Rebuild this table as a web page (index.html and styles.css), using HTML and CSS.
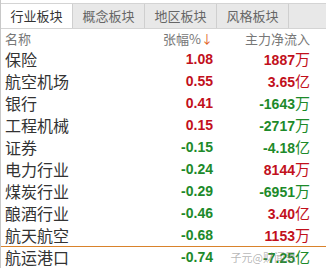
FILE: index.html
```
<!DOCTYPE html>
<html>
<head>
<meta charset="utf-8">
<link rel="stylesheet" href="styles.css">
</head>
<body>
<div class="panel">
  <div class="tabs">
    <div class="tab active">行业板块</div>
    <div class="tab">概念板块</div>
    <div class="tab">地区板块</div>
    <div class="tab">风格板块</div>
    <div class="tab rest"></div>
  </div>
  <div class="row head">
    <div class="name">名称</div>
    <div class="chg">张幅%<span class="arrow">↓</span></div>
    <div class="flow">主力净流入</div>
  </div>
  <div class="row"><div class="name">保险</div><div class="chg up">1.08</div><div class="flow up">1887<span class="u">万</span></div></div>
  <div class="row"><div class="name">航空机场</div><div class="chg up">0.55</div><div class="flow up">3.65<span class="u">亿</span></div></div>
  <div class="row"><div class="name">银行</div><div class="chg up">0.41</div><div class="flow down">-1643<span class="u">万</span></div></div>
  <div class="row"><div class="name">工程机械</div><div class="chg up">0.15</div><div class="flow down">-2717<span class="u">万</span></div></div>
  <div class="row"><div class="name">证券</div><div class="chg down">-0.15</div><div class="flow down">-4.18<span class="u">亿</span></div></div>
  <div class="row"><div class="name">电力行业</div><div class="chg down">-0.24</div><div class="flow up">8144<span class="u">万</span></div></div>
  <div class="row"><div class="name">煤炭行业</div><div class="chg down">-0.29</div><div class="flow down">-6951<span class="u">万</span></div></div>
  <div class="row"><div class="name">酿酒行业</div><div class="chg down">-0.46</div><div class="flow up">3.40<span class="u">亿</span></div></div>
  <div class="row sel"><div class="name">航天航空</div><div class="chg down">-0.68</div><div class="flow up">1153<span class="u">万</span></div></div>
  <div class="row"><div class="name">航运港口</div><div class="chg down">-0.74</div><div class="flow down">-7.25<span class="u">亿</span><span class="wm">子元@财闻思</span></div></div>
</div>
</body>
</html>
```
FILE: styles.css
```
html, body {
  margin: 0;
  padding: 0;
  background: #ffffff;
}
.panel {
  width: 326px;
  height: 268px;
  overflow: hidden;
  padding-top: 3px;
  box-sizing: border-box;
  border-left: 1px solid #c8c8c8;
  font-family: "Noto Sans CJK SC", "Liberation Sans", sans-serif;
}
.tabs {
  display: flex;
  height: 24px;
  border-top: 1px solid #d4d4d4;
  border-bottom: 1px solid #d4d4d4;
  background: #e8e8e8;
}
.tab {
  width: 71px;
  border-right: 1px solid #cfcfcf;
  font-size: 13px;
  line-height: 24px;
  text-align: center;
  color: #666;
}
.tab.active {
  background: #ffffff;
  color: #333;
}
.tab.rest {
  flex: 1;
  border-right: none;
}
.row {
  display: flex;
  align-items: center;
  height: 22px;
  line-height: 18px;
}
.row.head {
  height: 19px;
  font-size: 13px;
  color: #777;
}
.row.sel {
  box-shadow: 0 1px 0 #d9822b;
  position: relative;
  z-index: 1;
}
.name {
  width: 142px;
  padding-left: 4px;
  box-sizing: border-box;
  font-size: 16px;
  color: #333;
  white-space: nowrap;
}
.head .name {
  font-size: 13px;
  color: #777;
}
.chg {
  width: 70px;
  text-align: right;
  font-family: "Liberation Sans", sans-serif;
  font-weight: bold;
  font-size: 14px;
}
.flow {
  position: relative;
  width: 97px;
  text-align: right;
  font-family: "Liberation Sans", sans-serif;
  font-weight: bold;
  font-size: 14px;
}
.head .chg, .head .flow {
  font-family: "Noto Sans CJK SC", sans-serif;
  font-weight: normal;
  font-size: 13px;
  color: #777;
}
.arrow {
  color: #e05a1a;
  font-size: 12px;
}
.u {
  font-family: "Noto Sans CJK SC", sans-serif;
  font-weight: normal;
  font-size: 15px;
}
.up { color: #c2101c; }
.down { color: #1d8a2a; }
.wm {
  position: absolute;
  right: 14px;
  top: 2px;
  line-height: 14px;
  font-family: "Noto Sans CJK SC", sans-serif;
  font-weight: normal;
  font-size: 11px;
  color: rgba(120, 120, 120, 0.55);
}
```
